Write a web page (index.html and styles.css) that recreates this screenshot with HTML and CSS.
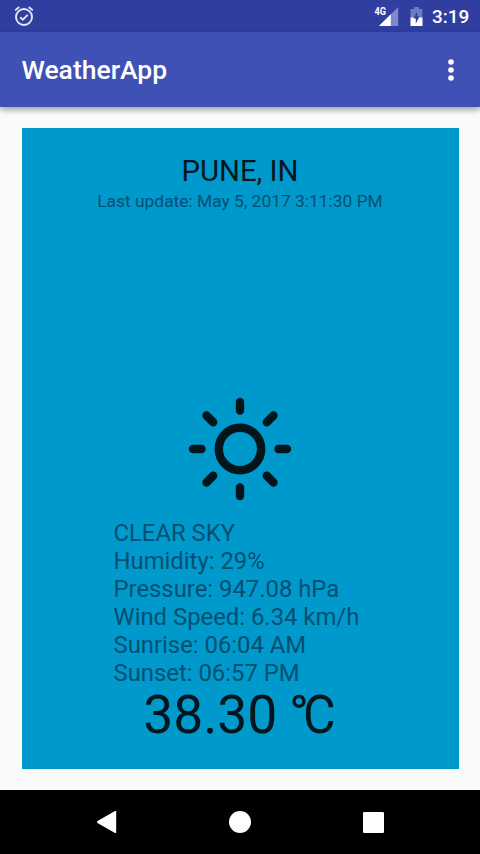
FILE: index.html
```html
<!DOCTYPE html>
<html lang="en">
<head>
<meta charset="utf-8">
<title>WeatherApp</title>
<link rel="stylesheet" href="styles.css">
</head>
<body>
<div class="screen">
  <div class="statusbar">
    <svg class="alarm" width="22" height="22" viewBox="0 0 22 22" fill="none" stroke="#e4e6f8" stroke-width="1.9">
      <circle cx="11" cy="12" r="8"/>
      <path d="M2.2 5.4 6.2 2M19.8 5.4 15.8 2M7.2 12.2l2.6 2.5 4.9-4.9"/>
    </svg>
    <div class="indicators">
      <svg class="signal" width="25" height="22" viewBox="0 0 25 22">
        <path fill="#7f88cc" d="M24.2 2v19H5z"/>
        <path fill="#fff" d="M16.8 9.3V21H5z"/>
        <text class="network" x="0.5" y="10" textLength="11.5" lengthAdjust="spacingAndGlyphs">4G</text>
      </svg>
      <svg class="battery" width="13" height="21" viewBox="0 0 13 21">
        <path fill="#7078c2" d="M4 1h5v2h3.3v9H.5V3H4z"/>
        <path fill="#fff" d="M.5 11.5h12V20H.5z"/>
        <path fill="#303f9f" d="M7.2 5.5v5h2.3L5.8 17.5v-5H3.5z"/>
      </svg>
      <span class="clock">3:19</span>
    </div>
  </div>
  <header class="appbar">
    <h1 class="title">WeatherApp</h1>
    <svg class="menu" width="6" height="22" viewBox="0 0 6 22" fill="#fff">
      <circle cx="3" cy="3" r="2.8"/><circle cx="3" cy="11" r="2.8"/><circle cx="3" cy="19" r="2.8"/>
    </svg>
  </header>
  <main class="content">
    <section class="card">
      <h2 class="city">PUNE, IN</h2>
      <p class="updated">Last update: May 5, 2017 3:11:30 PM</p>
      <svg class="sun" width="104" height="104" viewBox="-52 -52 104 104" fill="none" stroke="#04151c" stroke-width="8.4" stroke-linecap="round">
        <circle r="21.2"/>
        <path d="M0-47V-38.5M0 38.5V47M-47 0H-38.5M38.5 0H47M-33.5-33.5l6.7 6.7M33.5-33.5l-6.7 6.7M-33.5 33.5l6.7-6.7M33.5 33.5l-6.7-6.7"/>
      </svg>
      <div class="details">
        <div>CLEAR SKY</div>
        <div>Humidity: 29%</div>
        <div>Pressure: 947.08 hPa</div>
        <div>Wind Speed: 6.34 km/h</div>
        <div>Sunrise: 06:04 AM</div>
        <div>Sunset: 06:57 PM</div>
      </div>
      <div class="temp">38.30 <span class="degree">°</span><span class="unit">C</span></div>
    </section>
  </main>
  <nav class="navbar">
    <svg width="20" height="22" viewBox="0 0 20 22" fill="#fff"><path d="M.5 10 18 0q1.2-.6 1.2.8v20.4q0 1.4-1.2.8L.5 12q-1-1 0-2z"/></svg>
    <svg width="22" height="22" viewBox="0 0 22 22" fill="#fff"><circle cx="11" cy="11" r="11"/></svg>
    <svg width="21" height="21" viewBox="0 0 21 21" fill="#fff"><rect width="21" height="21" rx="1.2"/></svg>
  </nav>
</div>
</body>
</html>
```
FILE: styles.css
```css
* { box-sizing: border-box; }
body, h1, h2, p { margin: 0; font-weight: 400; }
body { font-family: Roboto, "Liberation Sans", sans-serif; }
svg { display: block; flex: none; }

.screen {
  width: 480px;
  height: 854px;
  display: flex;
  flex-direction: column;
  background: #fafafa;
  overflow: hidden;
}

.statusbar {
  height: 32px;
  flex: none;
  display: flex;
  justify-content: space-between;
  padding: 5px 11px 0 13px;
  background: #303f9f;
}
.indicators { display: flex; }
.network { font-size: 11px; font-weight: 700; fill: #fff; }
.battery { margin: 1px 9.5px 0 10.5px; }
.clock {
  width: 37px;
  color: #fff;
  font-size: 18.9px;
  font-weight: 500;
  line-height: 24px;
  white-space: nowrap;
}

.appbar {
  height: 74.5px;
  flex: none;
  display: flex;
  align-items: center;
  justify-content: space-between;
  padding: 1px 26.5px 0 21.5px;
  background: #3f51b5;
  box-shadow: 0 3px 6px rgba(0, 0, 0, 0.35);
}
.title {
  padding-top: 1px;
  color: #fff;
  font-size: 26.5px;
  font-weight: 500;
  line-height: 32px;
}

.content {
  flex: 1;
  display: flex;
  padding: 21.5px 21.5px;
}
.card {
  flex: 1;
  display: flex;
  flex-direction: column;
  align-items: center;
  padding: 25px 0 25px;
  background: #0099cc;
}
.city {
  color: #04161d;
  font-size: 29.33px;
  line-height: 36px;
}
.updated {
  margin-top: 2px;
  color: #044f72;
  font-size: 17.4px;
  line-height: 20px;
}
.sun { margin-top: auto; }
.details {
  width: 253px;
  margin-top: 18px;
  color: #044f72;
  font-size: 23.85px;
  line-height: 28px;
  white-space: nowrap;
}
.temp {
  margin-top: -1.5px;
  color: #04161d;
  font-size: 53.33px;
  line-height: 58px;
  white-space: nowrap;
}
.degree { margin-left: -1.5px; letter-spacing: -6px; }
.unit { display: inline-block; transform: scaleX(0.94); transform-origin: left; margin-right: -1px; }

.navbar {
  height: 64px;
  flex: none;
  display: flex;
  align-items: center;
  justify-content: space-between;
  padding: 0 96px 0 97px;
  background: #000;
}
```
